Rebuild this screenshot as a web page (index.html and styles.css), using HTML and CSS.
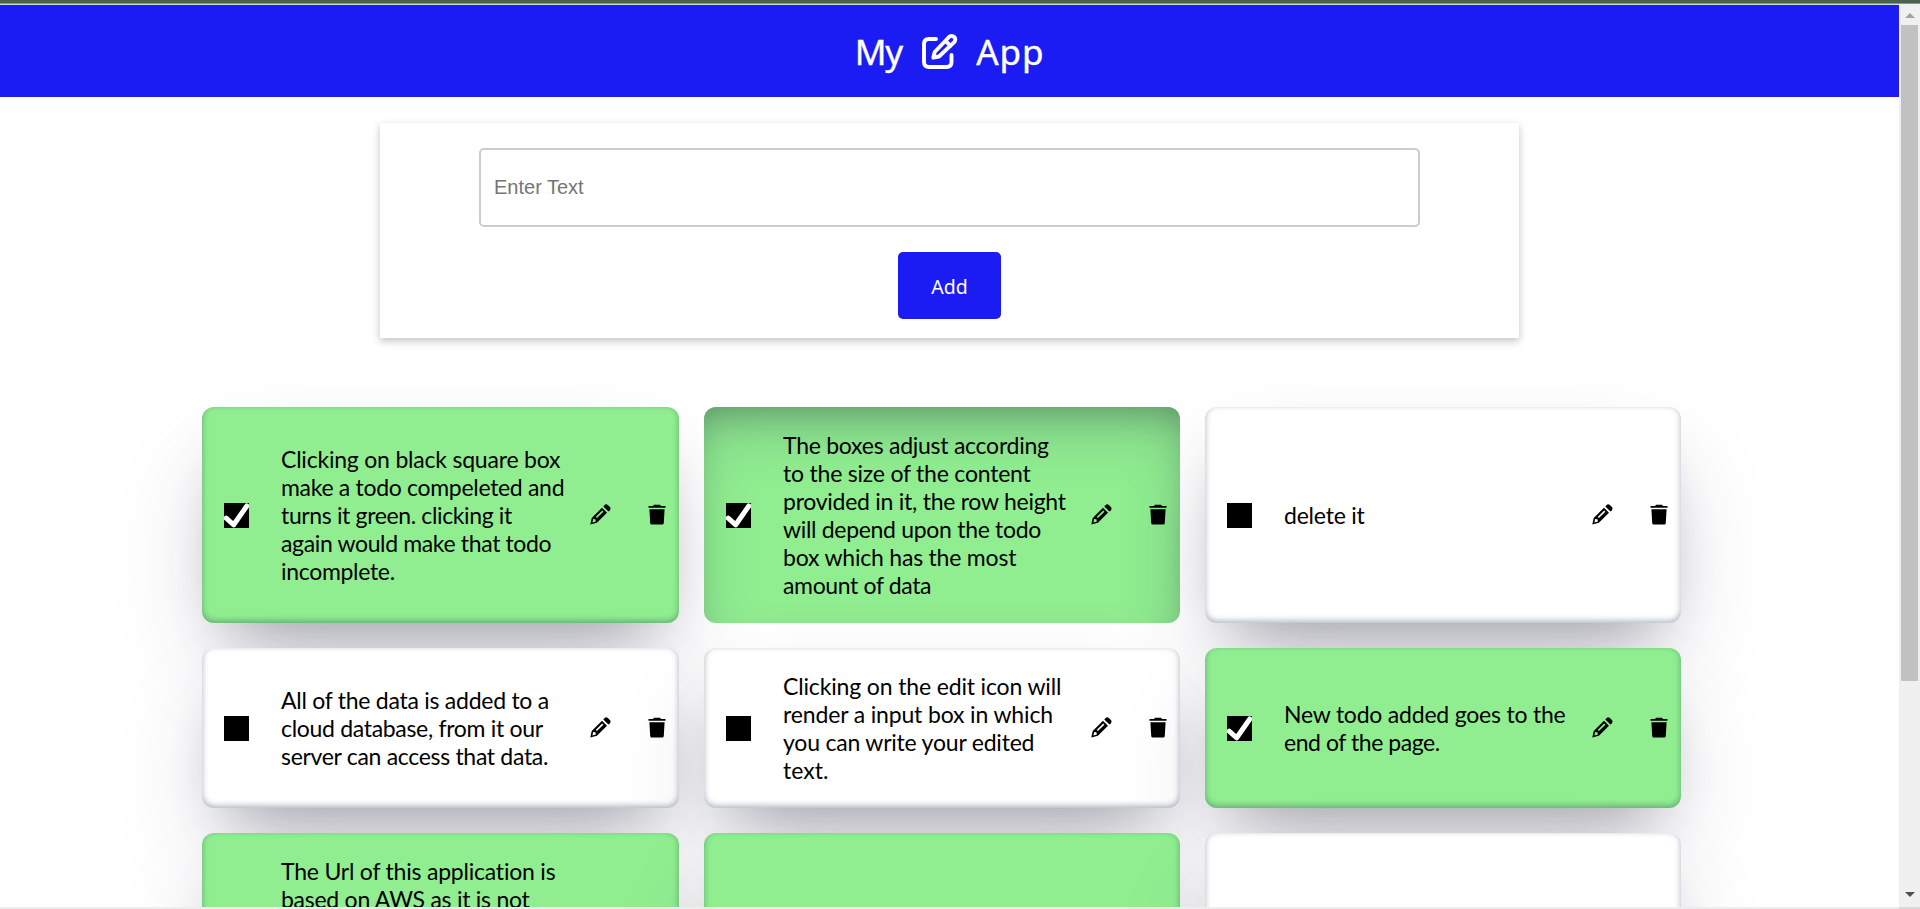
FILE: index.html
```html
<!DOCTYPE html>
<html lang="en">
<head>
<meta charset="utf-8">
<title>My App</title>
<link rel="stylesheet" href="styles.css">
</head>
<body>
<svg class="defs" aria-hidden="true">
  <symbol id="pencil" viewBox="0 0 21 21">
    <path fill-rule="evenodd" d="M12 3.700 17 8.700 6.900 18.700 0.300 20.600 1.700 13.900ZM3.200 15 2.400 18.500 5.900 17.600 5.400 15.300ZM12.200 6.600 5.700 12.900 6.900 14.100 13.400 7.800Z"/>
    <path d="M13.300 2.400 14.600 1Q16.200-.3 17.800 1L19.900 3Q21.200 4.600 19.900 6.200L18.400 7.500Z"/>
  </symbol>
  <symbol id="trash" viewBox="0 0 18 21">
    <path d="M0.500 2H5L6 .8H12L13 2H17.500V3.800H.5ZM1.400 5.300H16.600L15.800 19Q15.700 20.500 14.200 20.500H3.800Q2.300 20.500 2.200 19Z"/>
  </symbol>
  <symbol id="check" viewBox="0 0 25 25">
    <rect width="25" height="25"/>
    <path d="M2.200 15.200 9.700 21.800 22.800 3" fill="none" stroke="#fff" stroke-width="5" stroke-linecap="round" stroke-linejoin="round"/>
  </symbol>
  <symbol id="box" viewBox="0 0 25 25"><rect width="25" height="25"/></symbol>
</svg>
<div class="window">
  <div class="frame-top"></div>
  <div class="view">
    <main class="page">
      <header class="header">
        <h1 class="title"><span class="my">My</span>
          <svg class="logo" viewBox="0 0 36 37" fill="none" stroke="#fff" stroke-width="3.900" stroke-linecap="round" stroke-linejoin="round"><path d="M14 6H7Q2 6 2 11V29Q2 34 7 34H24.500Q29.500 34 29.500 29V22"/><path d="M11.300 24.700 12.700 19 27 4a3.600 3.600 0 0 1 5.200 5.200L17 23.500ZM23.500 7.800 28.500 12.800"/></svg>
          <span class="app">App</span></h1>
      </header>
      <form class="form">
        <input class="field" type="text" placeholder="Enter Text">
        <button class="add" type="button">Add</button>
      </form>
      <section class="grid">
        <article class="card done"><svg class="tick"><use href="#check"/></svg><p class="text"><span class="line s15">Clicking on black square box</span><span class="line s25">make a todo compeleted and</span><span class="line s30">turns it green. clicking it</span><span class="line s30">again would make that todo</span><span class="line s25">incomplete.</span></p><svg class="pencil"><use href="#pencil"/></svg><svg class="trash"><use href="#trash"/></svg></article>
        <article class="card done pressed"><svg class="tick"><use href="#check"/></svg><p class="text"><span class="line s20">The boxes adjust according</span><span class="line s15">to the size of the content</span><span class="line s20">provided in it, the row height</span><span class="line s25">will depend upon the todo</span><span class="line s15">box which has the most</span><span class="line s30">amount of data</span></p><svg class="pencil"><use href="#pencil"/></svg><svg class="trash"><use href="#trash"/></svg></article>
        <article class="card"><svg class="tick"><use href="#box"/></svg><p class="text"><span class="line s15">delete it</span></p><svg class="pencil"><use href="#pencil"/></svg><svg class="trash"><use href="#trash"/></svg></article>
        <article class="card"><svg class="tick"><use href="#box"/></svg><p class="text"><span class="line s20">All of the data is added to a</span><span class="line s25">cloud database, from it our</span><span class="line s25">server can access that data.</span></p><svg class="pencil"><use href="#pencil"/></svg><svg class="trash"><use href="#trash"/></svg></article>
        <article class="card"><svg class="tick"><use href="#box"/></svg><p class="text"><span class="line s10">Clicking on the edit icon will</span><span class="line s10">render a input box in which</span><span class="line s15">you can write your edited</span><span class="line">text.</span></p><svg class="pencil"><use href="#pencil"/></svg><svg class="trash"><use href="#trash"/></svg></article>
        <article class="card done"><svg class="tick"><use href="#check"/></svg><p class="text"><span class="line s15">New todo added goes to the</span><span class="line s40">end of the page.</span></p><svg class="pencil"><use href="#pencil"/></svg><svg class="trash"><use href="#trash"/></svg></article>
        <article class="card done tall"><p class="text"><span class="line s15">The Url of this application is</span><span class="line s20">based on AWS as it is not</span></p></article>
        <article class="card done tall"></article>
        <article class="card tall"></article>
      </section>
    </main>
    <aside class="scrollbar"><i class="arrow up"></i><div class="thumb"></div><i class="arrow down"></i></aside>
  </div>
  <div class="frame-bottom"><div class="corner"></div></div>
</div>
</body>
</html>
```
FILE: styles.css
```css
* { box-sizing: border-box; }
body { margin: 0; background: #fff; font-family: "Noto Sans", sans-serif; }
.defs { display: none; }
.window { display: flex; flex-direction: column; width: 1920px; height: 909px; overflow: hidden; }
.frame-top { height: 4px; flex: none; background: #48624c; border-bottom: 1px solid #88958a; }
.view { display: flex; flex: 1; min-height: 0; }
.page { width: 1899px; height: 903px; overflow: hidden; border-top: 1px solid #d5d8d8; }
.header { height: 92px; background: #1b1bf3; color: #fff; }
.title { display: flex; align-items: center; justify-content: center; height: 100%; margin: 0; font-size: 35px; font-weight: 400; line-height: 48px; -webkit-text-stroke: .4px #fff; }
.my { padding-top: 2px; letter-spacing: -1px; }
.app { padding-top: 2px; letter-spacing: .9px; }
.logo { width: 36px; height: 37px; margin: 0 18px 0 20px; }
.form { display: flex; flex-direction: column; align-items: center; gap: 25px; width: 1139px; height: 215px; margin: 26px auto 0; padding-top: 25px; background: #fff; box-shadow: rgba(0, 0, 0, .24) 0 3px 8px; }
.field { width: 941px; height: 79px; padding: 0 13px 1px; border: 2px solid #ccc; border-radius: 5px; background: #fff; font: 20px "Liberation Sans", sans-serif; }
.field::placeholder { color: #757575; }
.add { width: 103px; height: 67px; padding: 2px 0 0; border: 0; border-radius: 5px; background: #1b1bf3; color: #fff; font: 19.5px "Noto Sans", sans-serif; }
.grid { display: grid; grid-template-columns: 477px 476px 476px; grid-template-rows: 216px 160px 216px; gap: 25px; width: 1479px; margin: 69px 0 0 202px; }
.card { display: flex; align-items: center; padding: 24px 13px 24px 22px; border-radius: 12px; background: #fff; box-shadow: rgba(50, 50, 93, .25) 0 50px 100px -20px, rgba(0, 0, 0, .3) 0 30px 60px -30px, rgba(10, 37, 64, .35) 0 -2px 6px 0 inset; }
.done { background: lightgreen; }
.pressed { box-shadow: rgba(50, 50, 93, .25) 0 30px 60px -12px inset, rgba(0, 0, 0, .3) 0 18px 36px -18px inset; }
.tall { align-items: flex-start; padding-left: 79px; }
.tick { width: 25px; height: 25px; margin-right: 32px; flex: none; }
.text { flex: 1; min-width: 0; margin: 0; font: 23px/28px Lato, "Noto Sans", sans-serif; color: #000; }
.line { display: block; white-space: nowrap; }
.s10 { letter-spacing: -.15px; }
.s15 { letter-spacing: -.21px; }
.s20 { letter-spacing: -.26px; }
.s25 { letter-spacing: -.31px; }
.s30 { letter-spacing: -.36px; }
.s40 { letter-spacing: -.44px; }
.pencil { width: 21px; height: 21px; margin: 0 37px 2px 0; flex: none; }
.trash { width: 18px; height: 21px; margin-bottom: 2px; flex: none; }
.scrollbar { display: flex; flex-direction: column; align-items: center; width: 21px; background: #f0f0f0; }
.arrow { width: 0; height: 0; border: 5px solid transparent; }
.up { margin-top: 4px; border-bottom-color: #a3a3a3; }
.thumb { width: 17px; height: 656px; margin-top: 7px; background: #c1c1c1; }
.down { margin-top: auto; margin-bottom: 5px; border-top-color: #505050; }
.frame-bottom { display: flex; justify-content: flex-end; height: 2px; flex: none; background: #ededed; }
.corner { width: 21px; background: #d9d9d9; }
```
